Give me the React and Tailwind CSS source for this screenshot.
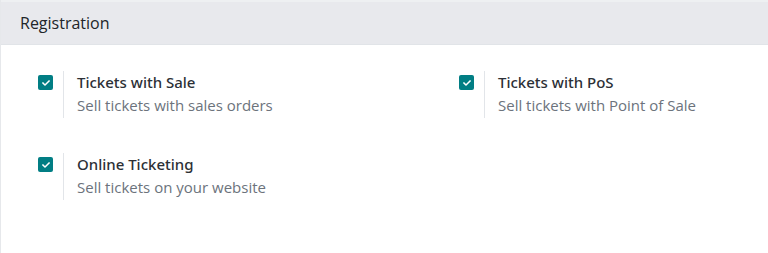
import { FaCheck } from 'react-icons/fa';

const settings = [
  { title: 'Tickets with Sale', desc: 'Sell tickets with sales orders' },
  { title: 'Tickets with PoS', desc: 'Sell tickets with Point of Sale' },
  { title: 'Online Ticketing', desc: 'Sell tickets on your website' },
];

function SettingBox({ title, desc }) {
  return (
    <div className="flex">
      {/* checkbox pane */}
      <div className="w-[26px] pt-[4px] pl-px">
        <div className="w-[15px] h-[15px] rounded-[2px] bg-[#017e84] flex items-center justify-center">
          <FaCheck className="w-[8px] h-[8px] text-white" />
        </div>
      </div>
      {/* text pane */}
      <div className="border-l border-[#e2e5e9] pl-[13px] h-[47px]">
        <div className="font-['Noto_Sans',sans-serif] text-[15px] leading-[22px] font-medium text-[#2c3036]">{title}</div>
        <div className="mt-px text-[15px] leading-[22px] text-[#6c737c]">{desc}</div>
      </div>
    </div>
  );
}

export default function App() {
  return (
    <div
      className="w-[768px] h-[253px] bg-white border-l border-[#e6e8eb] overflow-hidden"
      style={{ fontFamily: '"Open Sans", "Noto Sans", sans-serif' }}
    >
      {/* section header */}
      <div className="h-[45px] bg-[#e8e9ed] border-t-2 border-[#eef0f2] border-b border-b-[#e1e4e8] flex items-center pl-[19px]">
        <h2 className="text-[16px] text-[#212529]">Registration</h2>
      </div>

      {/* settings grid */}
      <div className="grid grid-cols-[421px_421px] gap-y-[35px] pl-[36px] pt-[26px]">
        {settings.map((s) => (
          <SettingBox key={s.title} {...s} />
        ))}
      </div>
    </div>
  );
}
